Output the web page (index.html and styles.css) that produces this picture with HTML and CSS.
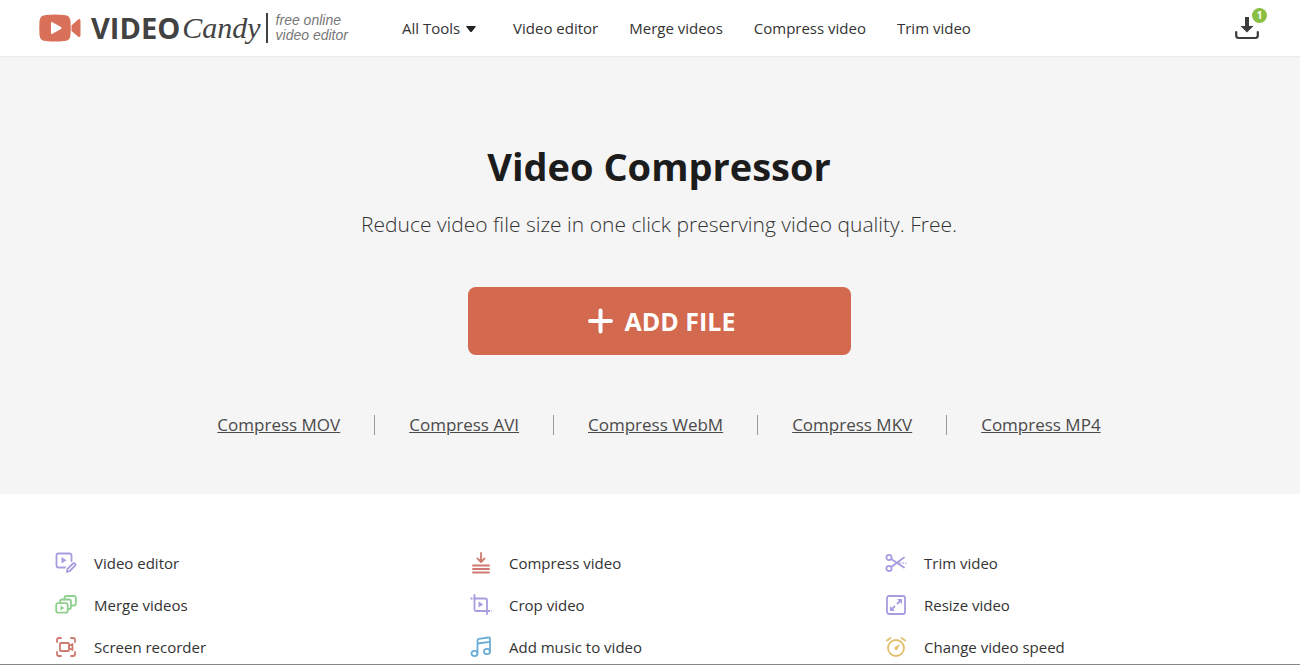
FILE: index.html
```html
<!DOCTYPE html>
<html lang="en">
  <head>
    <meta charset="UTF-8">
    <meta name="viewport" content="width=device-width, initial-scale=1.0">
    <title>Video Compressor - Video Candy</title>
    <link rel="stylesheet" href="styles.css">
  </head>
  <body>
    <header class="header">
      <a class="logo" href="/">
        <svg class="logo-icon" width="42" height="28" viewBox="0 0 42 28" aria-hidden="true">
          <path fill="#d9705a" d="M7 1Q16 0 25 1Q31 1 31.500 7Q32 14 31.500 21Q31 27 25 27Q16 28 7 27Q1 27 .5 21Q0 14 .5 7Q1 1 7 1z"/>
          <path fill="#d9705a" d="M32.500 11.500L39 5.500Q41.500 4 41.500 7V21Q41.500 24 39 22.500L32.500 17z"/>
          <path fill="#fff" d="M12 9Q12 7.500 13.500 8.200L22 13Q23.300 14 22 15L13.500 19.800Q12 20.500 12 19z"/>
        </svg>
        <span class="logo-video">VIDEO</span>
        <span class="logo-candy">Candy</span>
        <span class="logo-slogan">free online<br>video editor</span>
      </a>
      <nav>
        <ul class="nav-menu">
          <li>
            <a href="/tools">All Tools
              <svg width="10" height="6" viewBox="0 0 10 6" aria-hidden="true"><path fill="#222" d="M1 0h8q1.500 0 .5 1L6 5.400q-1 1-2 0L.5 1Q-.5 0 1 0z"/></svg>
            </a>
          </li>
          <li><a href="/video-editor">Video editor</a></li>
          <li><a href="/merge-videos">Merge videos</a></li>
          <li><a href="/compress-video">Compress video</a></li>
          <li><a href="/trim-video">Trim video</a></li>
        </ul>
      </nav>
      <a class="downloads" href="/downloads" aria-label="Downloads">
        <svg width="24" height="24" viewBox="0 0 24 24" aria-hidden="true">
          <path fill="#3c3c3c" d="M10 1h4v9h4.500L12 16.500 5.500 10H10z"/>
          <path fill="none" stroke="#3c3c3c" stroke-width="2.200" stroke-linecap="round" d="M1.200 16v3.500q0 2.500 2.500 2.500h16.600q2.500 0 2.500-2.500V16"/>
        </svg>
        <span class="badge">1</span>
      </a>
    </header>

    <main>
      <section class="hero">
        <h1>Video Compressor</h1>
        <p>Reduce video file size in one click preserving video quality. Free.</p>
        <button class="btn" type="button">
          <svg width="25" height="26" viewBox="0 0 25 26" aria-hidden="true"><path fill="none" stroke="#fff" stroke-width="4" stroke-linecap="round" d="M12.500 2.500v21M2 13h21"/></svg>
          ADD FILE
        </button>
        <ul class="formats">
          <li><a href="/compress-mov">Compress MOV</a></li>
          <li><a href="/compress-avi">Compress AVI</a></li>
          <li><a href="/compress-webm">Compress WebM</a></li>
          <li><a href="/compress-mkv">Compress MKV</a></li>
          <li><a href="/compress-mp4">Compress MP4</a></li>
        </ul>
      </section>

      <section class="tools">
        <a class="tool purple" href="/video-editor">
          <svg viewBox="0 0 22 22" aria-hidden="true">
            <path d="M10 15.500H3.500q-2 0-2-2v-10q0-2 2-2h11q2 0 2 2V9"/>
            <path class="fill" d="M6.500 5v6.500l5-3.200z"/>
            <path d="M12 20l.5-3.200 5.500-5.300q1-.8 2 .2t0 2L14.800 19z"/>
          </svg>
          Video editor
        </a>
        <a class="tool red" href="/compress-video">
          <svg viewBox="0 0 22 22" aria-hidden="true">
            <path d="M11 1v8.500M7.500 6.500L11 10l3.500-3.500M3 13.500h16M3 17h16M3 20.500h16"/>
          </svg>
          Compress video
        </a>
        <a class="tool purple" href="/trim-video">
          <svg viewBox="0 0 22 22" aria-hidden="true">
            <circle cx="4" cy="5.500" r="2.600"/>
            <circle cx="4" cy="16.500" r="2.600"/>
            <path d="M6.200 7L19 15.500M6.200 15L19 5.500"/>
            <path stroke-width="1.200" stroke-linecap="butt" stroke-dasharray="2 1" d="M14 11h7.500"/>
          </svg>
          Trim video
        </a>
        <a class="tool green" href="/merge-videos">
          <svg viewBox="0 0 22 22" aria-hidden="true">
            <rect x="1.200" y="9.200" width="11.500" height="9.500" rx="2"/>
            <path class="fill" d="M5.500 11.500v5l4-2.500z"/>
            <path d="M5 9V7.500q0-2 2-2h7q2 0 2 2V13q0 2-2 2h-1"/>
            <path d="M9.500 5.500V4q0-2 2-2h7.300q2 0 2 2v5.500q0 2-2 2H16"/>
          </svg>
          Merge videos
        </a>
        <a class="tool purple" href="/crop-video">
          <svg viewBox="0 0 22 22" aria-hidden="true">
            <path d="M4.500 1v14.500q0 1.500 1.500 1.500h11M4.500 4.500H15q2 0 2 2V20"/>
            <path stroke-linecap="butt" stroke-dasharray="2 1" d="M.5 4.500h4M18 17h3.500"/>
            <path class="fill" d="M8.500 7.500v6l4.800-3z"/>
          </svg>
          Crop video
        </a>
        <a class="tool purple" href="/resize-video">
          <svg viewBox="0 0 22 22" aria-hidden="true">
            <rect x="2" y="2" width="18" height="18" rx="2"/>
            <path d="M12.500 9.500L15.500 6.500M9.500 12.500L6.500 15.500"/>
            <path class="fill" d="M12 5h5v5zM5 12v5h5z"/>
          </svg>
          Resize video
        </a>
        <a class="tool red" href="/screen-recorder">
          <svg viewBox="0 0 22 22" aria-hidden="true">
            <path d="M2 6V4q0-2 2-2h2M16 2h2q2 0 2 2v2M20 16v2q0 2-2 2h-2M6 20H4q-2 0-2-2v-2"/>
            <rect x="5" y="7" width="9" height="8" rx="1"/>
            <path d="M14 10l3.500-2v6L14 12z"/>
          </svg>
          Screen recorder
        </a>
        <a class="tool blue" href="/add-music-to-video">
          <svg viewBox="0 0 22 22" aria-hidden="true">
            <path d="M7.500 17V4.500q0-1.500 1.500-1.700l9.500-1.300q1.500-.2 1.500 1.300V15M7.500 7.500L20 5.800"/>
            <ellipse cx="4.500" cy="17.500" rx="3" ry="2.700"/>
            <ellipse cx="17" cy="15.500" rx="3" ry="2.700"/>
          </svg>
          Add music to video
        </a>
        <a class="tool yellow" href="/change-video-speed">
          <svg viewBox="0 0 22 22" aria-hidden="true">
            <circle cx="11" cy="12" r="8"/>
            <path d="M2 4.500L5.500 2M20 4.500L16.500 2"/>
            <path class="fill" d="M15 8L12.600 13.300q-1.300 1.400-2.600.2t0-2.600z"/>
          </svg>
          Change video speed
        </a>
      </section>
    </main>
  </body>
</html>
```
FILE: styles.css
```css
* {
  box-sizing: border-box;
}

body {
  margin: 0;
  background-color: #fff;
  color: #333;
  font-family: "Open Sans", sans-serif;
  font-size: 15px;
}

a {
  color: inherit;
  text-decoration: none;
}

ul {
  list-style: none;
  margin: 0;
  padding: 0;
}

.header {
  display: flex;
  align-items: center;
  height: 57px;
  padding: 0 41px 0 39px;
  border-bottom: 1px solid #ebebeb;
}

.logo {
  display: flex;
  align-items: center;
  color: #424242;
}

.logo-video {
  margin-left: 10px;
  font-size: 29px;
  font-weight: bold;
  line-height: 40px;
}

.logo-candy {
  margin-left: 2px;
  font-family: "Liberation Serif", serif;
  font-size: 30px;
  font-style: italic;
  line-height: 40px;
}

.logo-slogan {
  margin-left: 5px;
  padding-left: 8px;
  border-left: 2px solid #424242;
  color: #777;
  font-family: "Liberation Sans", sans-serif;
  font-size: 14px;
  font-style: italic;
  line-height: 15px;
}

.nav-menu {
  display: flex;
  gap: 31px;
  margin-left: 54px;
}

.nav-menu li:first-child {
  margin-right: 6px;
}

.nav-menu svg {
  margin-left: 2px;
  vertical-align: 2px;
}

.downloads {
  position: relative;
  display: flex;
  margin-left: auto;
}

.badge {
  position: absolute;
  top: -8px;
  right: -8px;
  width: 15px;
  height: 15px;
  border-radius: 50%;
  background-color: #8bbf43;
  color: #fff;
  font-size: 10px;
  font-weight: bold;
  line-height: 15px;
  text-align: center;
}

.hero {
  display: flex;
  flex-direction: column;
  align-items: center;
  padding: 83px 0 57px 18px;
  background-color: #f5f5f5;
}

.hero h1 {
  margin: 0;
  color: #1c1c1c;
  font-size: 38px;
  line-height: 52px;
}

.hero p {
  margin: 17px 0 48px;
  font-size: 21px;
  font-weight: 300;
  line-height: 30px;
}

.btn {
  display: flex;
  justify-content: center;
  align-items: center;
  gap: 12px;
  width: 383px;
  height: 68px;
  padding: 0 0 0 5px;
  border: none;
  border-radius: 8px;
  background-color: #d3694e;
  color: #fff;
  font-family: inherit;
  font-size: 25px;
  font-weight: bold;
}

.formats {
  display: flex;
  margin-top: 57px;
  color: #4a4a4a;
  font-size: 17px;
  line-height: 25px;
}

.formats li {
  display: flex;
  align-items: center;
}

.formats li + li::before {
  content: "";
  width: 1px;
  height: 20px;
  margin: 0 34px;
  background-color: #999;
}

.formats a {
  text-decoration: underline;
}

.tools {
  display: grid;
  grid-template-columns: repeat(3, 1fr);
  row-gap: 20px;
  padding: 58px 0 6px 55px;
  border-bottom: 1px solid #888;
}

.tool {
  display: flex;
  align-items: center;
  gap: 17px;
  line-height: 22px;
}

.tool svg {
  width: 22px;
  height: 22px;
  fill: none;
  stroke-width: 1.8;
  stroke-linecap: round;
  stroke-linejoin: round;
}

.purple svg {
  color: #a79de0;
  stroke: #a79de0;
}

.red svg {
  color: #cf7a70;
  stroke: #cf7a70;
}

.green svg {
  color: #8fd08f;
  stroke: #8fd08f;
}

.blue svg {
  color: #6aaed6;
  stroke: #6aaed6;
}

.yellow svg {
  color: #e3bf6c;
  stroke: #e3bf6c;
}

.tool .fill {
  fill: currentColor;
  stroke: none;
}
```
